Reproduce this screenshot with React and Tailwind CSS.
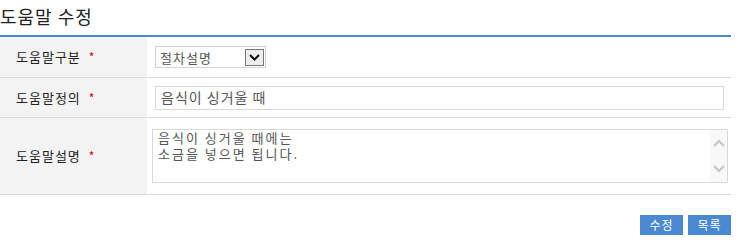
import React from 'react';

const fontStack = { fontFamily: '"Noto Sans CJK KR", "Noto Sans", sans-serif' };

const Required = () => <span className="ml-[8px] text-[12px] text-[#d40000]">*</span>;

const FormRow = ({ label, height, children }) => (
  <div className={`flex border-b border-[#dcdcdc] ${height}`}>
    <div className="flex w-[147px] shrink-0 items-center bg-[#f3f3f3] pl-[16px] text-[13px] tracking-[1px] text-[#222]">
      {label}
      <Required />
    </div>
    <div className="flex flex-1 items-center">{children}</div>
  </div>
);

const App = () => {
  return (
    <div className="h-[251px] w-[738px] bg-white" style={fontStack}>
      <div className="w-[731px]">
        <h2 className="h-[35px] pt-[4px] text-[18px] leading-[24px] tracking-[1px] text-[#222]">도움말 수정</h2>
        <div className="h-[2px] bg-[#4a88d2]" />

        <FormRow label="도움말구분" height="h-[41px]">
          <div className="ml-[8px] flex h-[22px] w-[111px] items-center border border-[#d4d4d4] bg-white">
            <span className="flex-1 pl-[4px] text-[13px] leading-none tracking-[1px] text-[#555]">절차설명</span>
            <span className="mr-[1px] flex h-[17px] w-[19px] items-center justify-center border border-[#777] bg-[#eeeeee]">
              <svg width="11" height="7" viewBox="0 0 11 7">
                <path d="M1 1 L5.5 5.5 L10 1" fill="none" stroke="#111" strokeWidth="2" />
              </svg>
            </span>
          </div>
        </FormRow>

        <FormRow label="도움말정의" height="h-[40px]">
          <div className="ml-[8px] flex h-[24px] w-[569px] items-center border border-[#d8d8d8] bg-white pl-[5px] text-[14px] tracking-[1px] text-[#555]">
            음식이 싱거울 때
          </div>
        </FormRow>

        <FormRow label="도움말설명" height="h-[77px]">
          <div className="ml-[5px] flex h-[54px] w-[576px] border border-[#d8d8d8] bg-white">
            <div
              className="flex-1 pl-[5px] text-[13px] leading-[16px] tracking-[2px] text-[#555]"
              style={{ fontFamily: '"Noto Sans CJK KR", "DejaVu Sans Mono", monospace' }}
            >
              <div>음식이 싱거울 때에는</div>
              <div>소금을 넣으면 됩니다.</div>
            </div>
            <div className="flex w-[17px] flex-col items-center justify-between bg-[#f8f8f8] py-[9px]">
              <svg width="12" height="8" viewBox="0 0 12 8">
                <path d="M1 7 L6 2 L11 7" fill="none" stroke="#c4c4c4" strokeWidth="2" />
              </svg>
              <svg width="12" height="8" viewBox="0 0 12 8">
                <path d="M1 1 L6 6 L11 1" fill="none" stroke="#c4c4c4" strokeWidth="2" />
              </svg>
            </div>
          </div>
        </FormRow>

        <div className="mt-[20px] flex justify-end gap-[5px]">
          <button className="h-[20px] w-[43px] bg-[#4a88d2] text-[12px] leading-none tracking-[1px] text-white">수정</button>
          <button className="h-[20px] w-[43px] bg-[#4a88d2] text-[12px] leading-none tracking-[1px] text-white">목록</button>
        </div>
      </div>
    </div>
  );
};

export default App;
